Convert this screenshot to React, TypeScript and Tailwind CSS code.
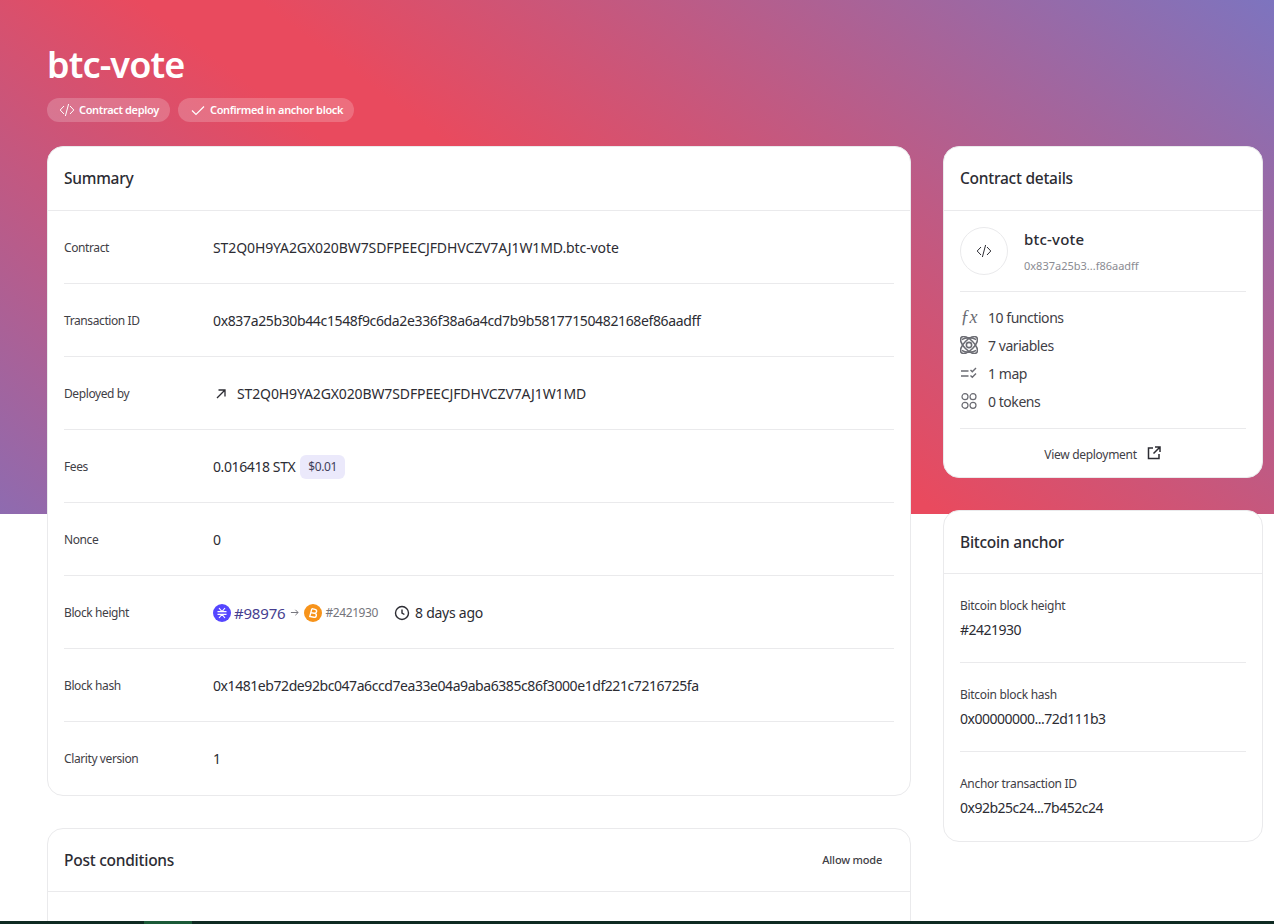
const font = { fontFamily: '"Noto Sans", sans-serif' };

function Row({ label, children, last, tracking }: { label: string; children: React.ReactNode; last?: boolean; tracking?: string }) {
  return (
    <div className={`flex h-[73px] items-center ${last ? "" : "border-b border-[#eaeaec] pt-px"}`}>
      <div className="w-[149px] shrink-0 text-[12px] leading-5 tracking-[-0.4px] text-[#3f4046]">{label}</div>
      <div className={`flex items-center text-[14px] leading-5 text-[#2c2c33] ${tracking ?? ""}`}>{children}</div>
    </div>
  );
}

function Head({ title, right, tall }: { title: string; right?: React.ReactNode; tall?: boolean }) {
  return (
    <div className={`flex items-center justify-between border-b border-[#eaeaec] px-4 ${tall ? "h-[64px] pb-px" : "h-[63px]"}`}>
      <div className="text-[15.5px] font-medium leading-6 tracking-[-0.25px] text-[#2c2c33]">{title}</div>
      {right}
    </div>
  );
}

function Pill({ icon, text }: { icon: React.ReactNode; text: string }) {
  return (
    <div className="flex h-6 items-center gap-1 rounded-full bg-white/20 pl-3 pr-[11px] text-[11px] font-semibold tracking-[-0.34px] text-white">
      {icon}
      {text}
    </div>
  );
}

function CodeIcon({ className }: { className: string }) {
  return (
    <svg viewBox="0 0 16 16" fill="none" stroke="currentColor" strokeWidth="1" className={className}>
      <path d="M5 4 1.2 8 5 12M11 4l3.8 4L11 12M9.6 2 6.4 14" />
    </svg>
  );
}

function StatRow({ icon, text }: { icon: React.ReactNode; text: string }) {
  return (
    <div className="flex h-7 items-center gap-[10px] text-[14px] tracking-[-0.45px] text-[#3f4046]">
      <div className="flex w-[18px] justify-center tracking-normal text-[#6b6c73]">{icon}</div>
      {text}
    </div>
  );
}

function Anchor({ label, value, last }: { label: string; value: string; last?: boolean }) {
  return (
    <div className={`flex h-[89px] flex-col justify-center gap-1 ${last ? "pb-px" : "border-b border-[#eaeaec]"}`}>
      <div className="text-[12px] leading-5 tracking-[-0.3px] text-[#3f4046]">{label}</div>
      <div className="text-[14px] leading-5 tracking-[-0.5px] text-[#2c2c33]">{value}</div>
    </div>
  );
}

export default function App() {
  return (
    <div style={font} className="relative h-[924px] overflow-hidden bg-white">
      <div className="absolute inset-x-0 top-0 h-[514px] bg-[linear-gradient(37deg,#8e6bb0_0%,#e94a5e_42%,#e94a5e_48%,#7d74bf_100%)]" />
      <div className="relative pl-[47px] pr-[11px]">
        <h1 className="flex h-[98px] items-end pb-[15px] text-[36px] font-semibold leading-none tracking-[-0.85px] text-white">btc-vote</h1>
        <div className="flex h-6 gap-2">
          <Pill icon={<CodeIcon className="h-4 w-4" />} text="Contract deploy" />
          <Pill
            icon={
              <svg viewBox="0 0 16 16" fill="none" stroke="currentColor" strokeWidth="1.2" className="h-4 w-4">
                <path d="M2 8.5 6 12.5 14 4.5" />
              </svg>
            }
            text="Confirmed in anchor block"
          />
        </div>
        <div className="mt-6 flex items-start gap-8">
          <div className="flex w-[864px] shrink-0 flex-col gap-8">
            <div className="rounded-2xl border border-[#eaeaec] bg-white">
              <Head tall title="Summary" />
              <div className="px-4">
                <Row label="Contract" tracking="tracking-[-0.1px]">ST2Q0H9YA2GX020BW7SDFPEECJFDHVCZV7AJ1W1MD.btc-vote</Row>
                <Row label="Transaction ID" tracking="tracking-[-0.36px]">0x837a25b30b44c1548f9c6da2e336f38a6a4cd7b9b58177150482168ef86aadff</Row>
                <Row label="Deployed by" tracking="tracking-[-0.12px]">
                  <svg viewBox="0 0 16 16" fill="none" stroke="currentColor" strokeWidth="1.3" className="mr-2 h-4 w-4">
                    <path d="M4 12 12 4M5.5 4H12v6.5" />
                  </svg>
                  ST2Q0H9YA2GX020BW7SDFPEECJFDHVCZV7AJ1W1MD
                </Row>
                <Row label="Fees" tracking="tracking-[-0.4px]">
                  0.016418 STX
                  <span className="ml-[5px] flex h-6 items-center rounded-md bg-[#ebe9fb] px-[8px] text-[12px] text-[#3f3f5a]">$0.01</span>
                </Row>
                <Row label="Nonce">0</Row>
                <Row label="Block height">
                  <svg viewBox="0 0 18 18" className="h-[18px] w-[18px]">
                    <circle cx="9" cy="9" r="9" fill="#5546ff" />
                    <path d="M4.5 7.6h9M4.5 10.4h9M6 4l3 3.6L12 4M6 14l3-3.6 3 3.6" stroke="#fff" strokeWidth="1.1" fill="none" />
                  </svg>
                  <span className="ml-[3px] text-[15px] tracking-[-0.2px] text-[#463e8f]">#98976</span>
                  <svg viewBox="0 0 10 10" fill="none" stroke="#75757c" strokeWidth="1.1" className="mx-[5px] h-[9px] w-[9px]">
                    <path d="M1 5h8M6 2l3 3-3 3" />
                  </svg>
                  <svg viewBox="0 0 18 18" className="h-[18px] w-[18px]">
                    <circle cx="9" cy="9" r="9" fill="#f7931a" />
                    <path d="M7 5h3.2a2 2 0 0 1 0 4H7m0 0h3.8a2 2 0 0 1 0 4H6.6L7 5" stroke="#fff" strokeWidth="1.4" fill="none" transform="rotate(12 9 9)" />
                  </svg>
                  <span className="ml-[3px] text-[12px] tracking-[-0.4px] text-[#75757c]">#2421930</span>
                  <svg viewBox="0 0 16 16" fill="none" stroke="currentColor" strokeWidth="1.4" className="ml-4 mr-[5px] h-4 w-4">
                    <circle cx="8" cy="8" r="6.5" />
                    <path d="M8 4.4V8l2.4 1.5" />
                  </svg>
                  <span className="tracking-[-0.25px]">8 days ago</span>
                </Row>
                <Row label="Block hash" tracking="tracking-[-0.43px]">0x1481eb72de92bc047a6ccd7ea33e04a9aba6385c86f3000e1df221c7216725fa</Row>
                <Row label="Clarity version" last>1</Row>
              </div>
            </div>
            <div className="rounded-2xl border border-[#eaeaec] bg-white">
              <Head title="Post conditions" right={<div className="pr-3 text-[11px] font-medium tracking-[-0.2px] text-[#3f4046]">Allow mode</div>} />
              <div className="h-[200px]" />
            </div>
          </div>
          <div className="flex w-[320px] shrink-0 flex-col gap-8">
            <div className="rounded-2xl border border-[#eaeaec] bg-white">
              <Head tall title="Contract details" />
              <div className="px-4">
                <div className="flex h-[81px] items-center gap-4 border-b border-[#eaeaec]">
                  <div className="flex h-12 w-12 items-center justify-center rounded-full border border-[#eaeaec] text-[#2c2c33]">
                    <CodeIcon className="h-4 w-4" />
                  </div>
                  <div className="flex flex-col gap-[9px]">
                    <div className="text-[15px] font-medium leading-5 tracking-[0.2px] text-[#2c2c33]">btc-vote</div>
                    <div className="text-[11px] leading-4 text-[#8a8b92]">0x837a25b3...f86aadff</div>
                  </div>
                </div>
                <div className="border-b border-[#eaeaec] pb-[13px] pt-[11px]">
                  <StatRow
                    text="10 functions"
                    icon={<span className="text-[18px] italic leading-none" style={{ fontFamily: '"Liberation Serif", serif' }}>ƒx</span>}
                  />
                  <StatRow
                    text="7 variables"
                    icon={
                      <svg viewBox="1.5 1.5 15 15" fill="none" stroke="currentColor" strokeWidth="1.3" className="h-[18px] w-[18px]">
                        <circle cx="9" cy="9" r="2.2" />
                        <ellipse cx="9" cy="9" rx="9" ry="4.2" transform="rotate(45 9 9)" />
                        <ellipse cx="9" cy="9" rx="9" ry="4.2" transform="rotate(135 9 9)" />
                        <path d="M3 4.5C6 2.5 12 2.5 15 4.5M3 13.5c3 2 9 2 12 0" />
                      </svg>
                    }
                  />
                  <StatRow
                    text="1 map"
                    icon={
                      <svg viewBox="0 0 18 18" fill="none" stroke="currentColor" strokeWidth="1.4" className="h-[18px] w-[18px]">
                        <path d="M1 7h7.5M1 12h7.5M10.5 6l1.8 1.8L16 4M10.5 11.5l1.8 1.8 3.7-3.8" />
                      </svg>
                    }
                  />
                  <StatRow
                    text="0 tokens"
                    icon={
                      <svg viewBox="0 0 18 18" fill="none" stroke="currentColor" strokeWidth="1.2" className="h-[18px] w-[18px]">
                        <circle cx="5" cy="4.7" r="3" />
                        <circle cx="13" cy="4.7" r="3" />
                        <circle cx="5" cy="13.3" r="3" />
                        <circle cx="13" cy="13.3" r="3" />
                      </svg>
                    }
                  />
                </div>
                <div className="flex h-[48px] items-center justify-center gap-[9px] pt-[3px] text-[12px] tracking-[-0.3px] text-[#3f4046]">
                  View deployment
                  <svg viewBox="0 0 16 16" fill="none" stroke="#2c2c33" strokeWidth="1.5" className="-mt-[3px] h-4 w-4">
                    <path d="M7 3H2.5v10.5H13V9M9 2h5v5M14 2 7.5 8.5" />
                  </svg>
                </div>
              </div>
            </div>
            <div className="rounded-2xl border border-[#eaeaec] bg-white">
              <Head title="Bitcoin anchor" />
              <div className="px-4">
                <Anchor label="Bitcoin block height" value="#2421930" />
                <Anchor label="Bitcoin block hash" value="0x00000000...72d111b3" />
                <Anchor label="Anchor transaction ID" value="0x92b25c24...7b452c24" last />
              </div>
            </div>
          </div>
        </div>
      </div>
      <div className="absolute inset-x-0 bottom-0 flex h-[3px] bg-[#0f2a22]">
        <div className="ml-[144px] w-[48px] bg-[#1b5a38]" />
      </div>
    </div>
  );
}
